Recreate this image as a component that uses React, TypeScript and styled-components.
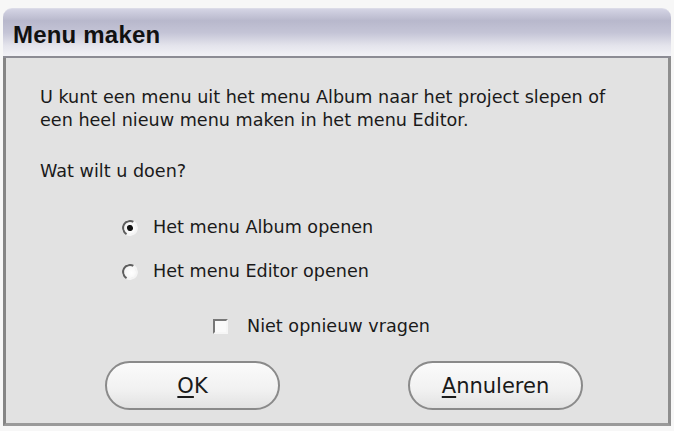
import React from "react";
import styled, { createGlobalStyle } from "styled-components";

const GlobalStyle = createGlobalStyle`
  html, body {
    margin: 0;
    padding: 0;
    background: #f7f7f7;
  }
  body {
    font-family: "DejaVu Sans", "Liberation Sans", sans-serif;
  }
`;

const Window = styled.div`
  width: 668px;
  margin: 8px 0 0 3px;
  display: flex;
  flex-direction: column;
`;

const TitleBar = styled.div`
  height: 50px;
  border-radius: 9px 9px 0 0;
  border-top: 1px solid #dcdce8;
  border-bottom: 2px solid #8c8c94;
  background: linear-gradient(
    to bottom,
    #d4d4e4 0%,
    #b8b8cc 25%,
    #c4c4d6 50%,
    #e4e4ec 78%,
    #f2f2f6 100%
  );
  display: flex;
  align-items: center;
  padding: 5px 0 0 10px;
  box-sizing: border-box;
`;

const Title = styled.h1`
  margin: 0;
  font-family: "Liberation Sans", Arial, sans-serif;
  font-weight: bold;
  font-size: 24px;
  color: #111;
  letter-spacing: 0.2px;
`;

const Body = styled.div`
  background: #e2e2e2;
  border-left: 3px solid #858585;
  border-right: 3px solid #8e8e8e;
  border-bottom: 3px solid #9a9a9a;
  height: 368px;
  box-sizing: border-box;
  padding: 28px 0 0 34px;
  display: flex;
  flex-direction: column;
  color: #1a1a1a;
  font-size: 17.6px;
`;

const Intro = styled.p`
  margin: 0;
  line-height: 23px;
`;

const Question = styled.p`
  margin: 28px 0 0;
  line-height: 23px;
`;

const Options = styled.div`
  margin: 33px 0 0 82px;
  display: flex;
  flex-direction: column;
  gap: 21px;
`;

const Option = styled.label`
  display: flex;
  align-items: center;
  gap: 15px;
  line-height: 23px;
`;

const Radio = styled.span<{ checked?: boolean }>`
  width: 12px;
  height: 12px;
  border-radius: 50%;
  background: radial-gradient(circle at 60% 60%, #ffffff 0%, #f4f4f4 70%);
  border: 2.5px solid;
  border-color: #5e5e5e #f4f4f4 #f4f4f4 #5e5e5e;
  transform: rotate(-15deg);
  display: flex;
  align-items: center;
  justify-content: center;
  &::after {
    content: "";
    width: 6px;
    height: 6px;
    border-radius: 50%;
    background: ${({ checked }) => (checked ? "#111" : "transparent")};
  }
`;

const CheckRow = styled.label`
  margin: 32px 0 0 173px;
  display: flex;
  align-items: center;
  gap: 19px;
  line-height: 23px;
`;

const Check = styled.span`
  width: 11px;
  height: 11px;
  background: #fafafa;
  border: 2px solid;
  border-color: #777 #f6f6f6 #f6f6f6 #777;
`;

const Buttons = styled.div`
  margin: 23px 0 0 65px;
  display: flex;
  gap: 128px;
`;

const Button = styled.button`
  width: 175px;
  height: 49px;
  border-radius: 25px;
  border: 2px solid #8a8a8a;
  background: linear-gradient(to bottom, #fbfbfb 0%, #f1f1f1 60%, #e2e2e2 100%);
  font-family: "DejaVu Sans", "Liberation Sans", sans-serif;
  font-size: 21px;
  color: #1a1a1a;
  padding: 0;
  u {
    text-underline-offset: 3px;
  }
`;

export default function App() {
  return (
    <>
      <GlobalStyle />
      <Window>
        <TitleBar>
          <Title>Menu maken</Title>
        </TitleBar>
        <Body>
          <Intro>
            U kunt een menu uit het menu Album naar het project slepen of
            <br />
            een heel nieuw menu maken in het menu Editor.
          </Intro>
          <Question>Wat wilt u doen?</Question>
          <Options>
            <Option>
              <Radio checked />
              Het menu Album openen
            </Option>
            <Option>
              <Radio />
              Het menu Editor openen
            </Option>
          </Options>
          <CheckRow>
            <Check />
            Niet opnieuw vragen
          </CheckRow>
          <Buttons>
            <Button>
              <u>O</u>K
            </Button>
            <Button>
              <u>A</u>nnuleren
            </Button>
          </Buttons>
        </Body>
      </Window>
    </>
  );
}
